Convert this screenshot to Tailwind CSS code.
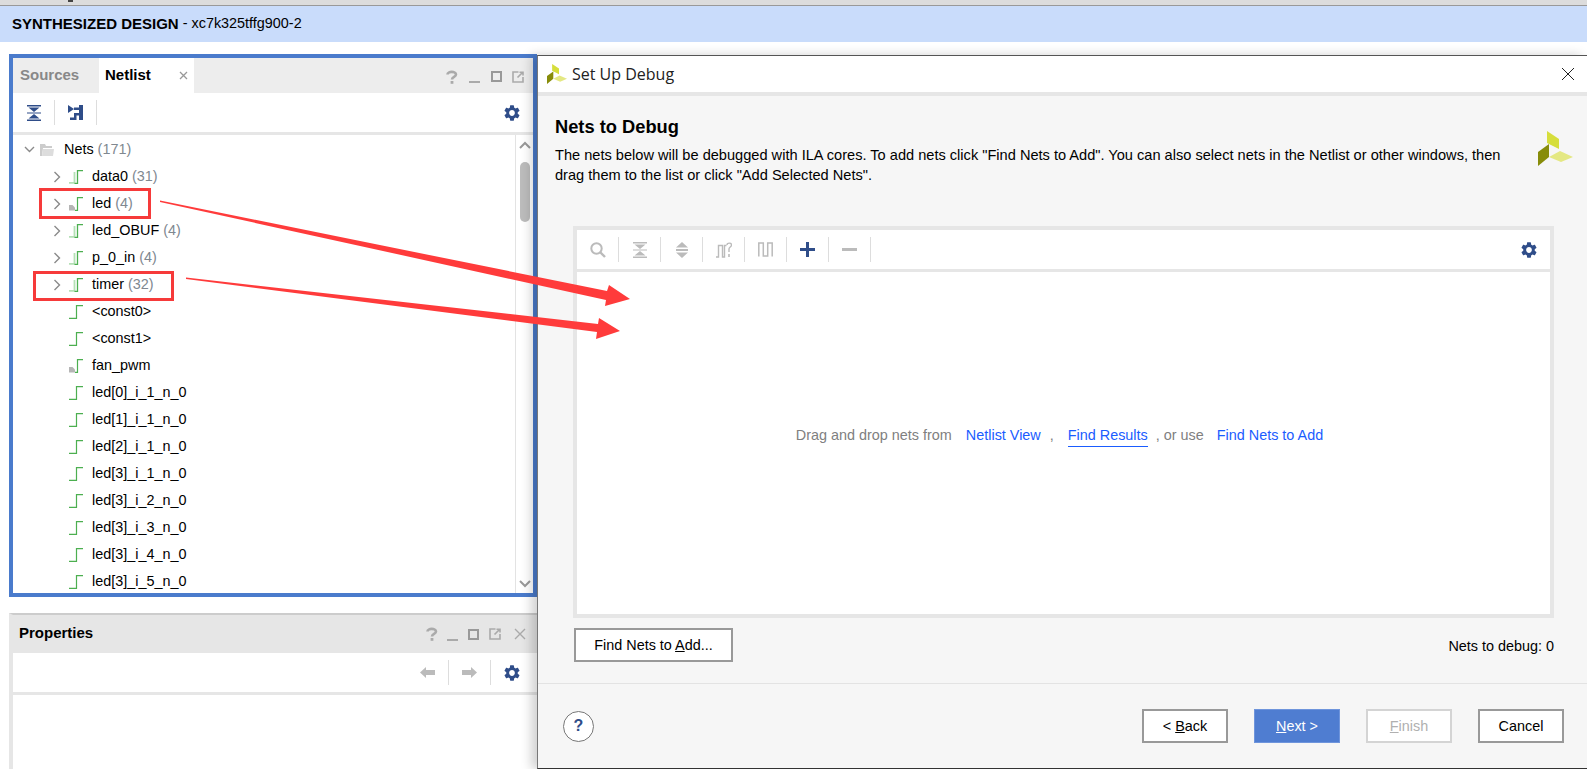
<!DOCTYPE html>
<html lang="en">
<head>
    <meta charset="UTF-8">
    <title>Set Up Debug</title>
    <script src="https://cdn.jsdelivr.net/npm/@tailwindcss/browser@4"></script>
</head>
<body class="bg-white">
    <svg class="hidden">
        <symbol id="gear" viewBox="2 2 20 20"><path fill="#2f4d89" d="M19.14 12.94c.04-.3.06-.61.06-.94 0-.32-.02-.64-.07-.94l2.03-1.58a.49.49 0 0 0 .12-.61l-1.92-3.32a.488.488 0 0 0-.59-.22l-2.39.96c-.5-.38-1.03-.7-1.62-.94l-.36-2.54a.484.484 0 0 0-.48-.41h-3.84c-.24 0-.43.17-.47.41l-.36 2.54c-.59.24-1.13.57-1.62.94l-2.39-.96c-.22-.08-.47 0-.59.22L2.74 8.87c-.12.21-.08.47.12.61l2.03 1.58c-.05.3-.09.63-.09.94s.02.64.07.94l-2.03 1.58a.49.49 0 0 0-.12.61l1.92 3.32c.12.22.37.29.59.22l2.39-.96c.5.38 1.03.7 1.62.94l.36 2.54c.05.24.24.41.48.41h3.84c.24 0 .44-.17.47-.41l.36-2.54c.59-.24 1.13-.56 1.62-.94l2.39.96c.22.08.47 0 .59-.22l1.92-3.32c.12-.22.07-.47-.12-.61l-2.01-1.58zM12 15.6c-1.98 0-3.6-1.62-3.6-3.6s1.62-3.6 3.6-3.6 3.6 1.62 3.6 3.6-1.62 3.6-3.6 3.6z"/></symbol>
        <symbol id="net" viewBox="0 0 14 14"><path fill="none" stroke="#4caf50" stroke-width="1.2" d="M0 13.4H7.5V.6H14"/></symbol>
        <symbol id="bus" viewBox="0 0 14 14"><path fill="none" stroke="#b5e0b6" stroke-width="1.8" d="M0 12.8H5.5V2"/><path fill="none" stroke="#4caf50" stroke-width="1.3" d="M5.5 13.4H8.5V.6H14"/></symbol>
        <symbol id="port" viewBox="0 0 14 14"><path fill="#b5b5b5" d="M0 8H3.5L6 10.5V13.5H0Z"/><path fill="none" stroke="#4caf50" stroke-width="1.2" d="M6 13.4H8.5V.6H14"/></symbol>
        <symbol id="chev" viewBox="0 0 8 12"><path fill="none" stroke="#8a8a8a" stroke-width="1.4" d="M1.5 1 6.5 6 1.5 11"/></symbol>
        <symbol id="logo" viewBox="0 0 35 35"><path fill="#d6de3c" d="M9 0 21 8V18L9 12Z"/><path fill="#878c0a" d="M0 21 11 13V26L0 35Z"/><path fill="#e4e883" d="M11 26 22 20 35 26 23 31Z"/></symbol>
        <symbol id="win-q" viewBox="0 0 12 14"><path fill="none" stroke="#aaa" stroke-width="2.6" d="M1.5 4.5C1.5 1 10 1 10 4.5 10 7 6 6.8 6 9.5"/><rect x="4.6" y="11" width="2.8" height="2.8" fill="#aaa"/></symbol>
        <symbol id="win-pop" viewBox="0 0 12 12"><path fill="none" stroke="#aaa" stroke-width="1.6" d="M6.5 1H1V11H11V6"/><path fill="none" stroke="#aaa" stroke-width="1.6" d="M5.5 6.5 10 2M7.5 1.2H11V4.5"/></symbol>
    </svg>

    <div class="relative w-[1587px] h-[769px] overflow-hidden flex flex-col font-['Liberation_Sans',Arial,sans-serif] text-[14.4px] text-black">
        <div class="h-[6px] shrink-0 bg-[#dcdcdc] border-b border-[#999]">
            <div class="ml-[68px] w-[5px] h-[2px] bg-[#444]"></div>
        </div>
        <div class="h-[36px] shrink-0 bg-[#c9dcfb] flex items-center pl-[12px]">
            <span class="font-bold text-[15px]">SYNTHESIZED DESIGN</span><span class="whitespace-pre"> - xc7k325tffg900-2</span>
        </div>

        <div class="flex-1 flex min-h-0">
            <!-- left column -->
            <div class="w-[537px] shrink-0 pl-[9px] pt-[12px] flex flex-col">
                <div class="h-[543px] shrink-0 border-4 border-[#4a7bcc] flex flex-col">
                    <div class="h-[35px] shrink-0 bg-[#ededed] flex">
                        <div class="w-[86px] pl-[7px] pt-[6px] font-bold text-[15px] text-[#888]">Sources</div>
                        <div class="w-[95px] bg-white pl-[6px] pt-[6px] font-bold text-[15px] flex justify-between">
                            <span>Netlist</span>
                            <svg class="w-[9px] h-[9px] mt-[7px] mr-[6px]" viewBox="0 0 9 9"><path stroke="#999" stroke-width="1.3" d="M1 1 8 8M8 1 1 8"/></svg>
                        </div>
                        <div class="ml-auto flex items-center pr-[4px] pt-[2px]">
                            <div class="w-[22px] flex justify-center"><svg class="w-[12px] h-[14px]"><use href="#win-q"/></svg></div>
                            <div class="w-[22px] flex justify-center"><div class="w-[11px] h-[2px] mt-[11px] bg-[#aaa]"></div></div>
                            <div class="w-[22px] flex justify-center"><div class="w-[11px] h-[11px] border-2 border-[#999]"></div></div>
                            <div class="w-[22px] flex justify-center"><svg class="w-[12px] h-[12px]"><use href="#win-pop"/></svg></div>
                        </div>
                    </div>
                    <div class="h-[39px] shrink-0 flex items-center border-b-[3px] border-[#e6e6e6] box-content">
                        <div class="w-[42px] h-[25px] flex items-center justify-center border-r border-[#ddd]">
                            <svg class="w-[14px] h-[16px]" viewBox="0 0 14 16"><path fill="#2f4d89" d="M0 0H14V1.6H0ZM1.5 2.4H12.5L7 7ZM7 9 12.5 13.6H1.5ZM0 14.4H14V16H0ZM0 7.4H14V8.6H0Z"/></svg>
                        </div>
                        <div class="w-[42px] h-[25px] flex items-center justify-center border-r border-[#ddd]">
                            <svg class="w-[15px] h-[15px]" viewBox="0 0 15 15"><path fill="#2f4d89" d="M0 0 6 4 0 8ZM11 0H15V15H11ZM6 2.5H11V5H6ZM2 12.5H6V8H11V10.5H8.5V15H2Z"/></svg>
                        </div>
                        <div class="ml-auto w-[42px] flex justify-center"><svg class="w-[16px] h-[16px]"><use href="#gear"/></svg></div>
                    </div>
                    <div class="flex-1 min-h-0 flex">
                        <div class="flex-1 overflow-hidden pt-[1px]">
                            <div class="h-[27px] flex items-center pl-[11px]">
                                <svg class="w-[11px] h-[7px]" viewBox="0 0 11 7"><path fill="none" stroke="#8a8a8a" stroke-width="1.4" d="M1 1 5.5 5.5 10 1"/></svg>
                                <svg class="w-[14px] h-[12px] ml-[5px]" viewBox="0 0 14 12"><path fill="#ccc" d="M0 0H5L6 2H12V4H3L2 12H0Z"/><path fill="#ddd" d="M3 5H14L13 12H2Z"/></svg>
                                <span class="ml-[10px]">Nets <span class="text-[#808890]">(171)</span></span>
                            </div>
                            <div class="h-[27px] flex items-center pl-[40px]"><svg class="w-[8px] h-[12px]"><use href="#chev"/></svg><svg class="w-[14px] h-[14px] ml-[8px]"><use href="#bus"/></svg><span class="ml-[9px]">data0 <span class="text-[#808890]">(31)</span></span></div>
                            <div class="h-[27px] flex items-center pl-[40px]"><svg class="w-[8px] h-[12px]"><use href="#chev"/></svg><svg class="w-[14px] h-[14px] ml-[8px]"><use href="#port"/></svg><span class="ml-[9px]">led <span class="text-[#808890]">(4)</span></span></div>
                            <div class="h-[27px] flex items-center pl-[40px]"><svg class="w-[8px] h-[12px]"><use href="#chev"/></svg><svg class="w-[14px] h-[14px] ml-[8px]"><use href="#bus"/></svg><span class="ml-[9px]">led_OBUF <span class="text-[#808890]">(4)</span></span></div>
                            <div class="h-[27px] flex items-center pl-[40px]"><svg class="w-[8px] h-[12px]"><use href="#chev"/></svg><svg class="w-[14px] h-[14px] ml-[8px]"><use href="#bus"/></svg><span class="ml-[9px]">p_0_in <span class="text-[#808890]">(4)</span></span></div>
                            <div class="h-[27px] flex items-center pl-[40px]"><svg class="w-[8px] h-[12px]"><use href="#chev"/></svg><svg class="w-[14px] h-[14px] ml-[8px]"><use href="#bus"/></svg><span class="ml-[9px]">timer <span class="text-[#808890]">(32)</span></span></div>
                            <div class="h-[27px] flex items-center pl-[56px]"><svg class="w-[14px] h-[14px]"><use href="#net"/></svg><span class="ml-[9px]">&lt;const0&gt;</span></div>
                            <div class="h-[27px] flex items-center pl-[56px]"><svg class="w-[14px] h-[14px]"><use href="#net"/></svg><span class="ml-[9px]">&lt;const1&gt;</span></div>
                            <div class="h-[27px] flex items-center pl-[56px]"><svg class="w-[14px] h-[14px]"><use href="#port"/></svg><span class="ml-[9px]">fan_pwm</span></div>
                            <div class="h-[27px] flex items-center pl-[56px]"><svg class="w-[14px] h-[14px]"><use href="#net"/></svg><span class="ml-[9px]">led[0]_i_1_n_0</span></div>
                            <div class="h-[27px] flex items-center pl-[56px]"><svg class="w-[14px] h-[14px]"><use href="#net"/></svg><span class="ml-[9px]">led[1]_i_1_n_0</span></div>
                            <div class="h-[27px] flex items-center pl-[56px]"><svg class="w-[14px] h-[14px]"><use href="#net"/></svg><span class="ml-[9px]">led[2]_i_1_n_0</span></div>
                            <div class="h-[27px] flex items-center pl-[56px]"><svg class="w-[14px] h-[14px]"><use href="#net"/></svg><span class="ml-[9px]">led[3]_i_1_n_0</span></div>
                            <div class="h-[27px] flex items-center pl-[56px]"><svg class="w-[14px] h-[14px]"><use href="#net"/></svg><span class="ml-[9px]">led[3]_i_2_n_0</span></div>
                            <div class="h-[27px] flex items-center pl-[56px]"><svg class="w-[14px] h-[14px]"><use href="#net"/></svg><span class="ml-[9px]">led[3]_i_3_n_0</span></div>
                            <div class="h-[27px] flex items-center pl-[56px]"><svg class="w-[14px] h-[14px]"><use href="#net"/></svg><span class="ml-[9px]">led[3]_i_4_n_0</span></div>
                            <div class="h-[27px] flex items-center pl-[56px]"><svg class="w-[14px] h-[14px]"><use href="#net"/></svg><span class="ml-[9px]">led[3]_i_5_n_0</span></div>
                        </div>
                        <div class="w-[18px] shrink-0 border-l border-[#e3e3e3] flex flex-col items-center pt-[6px] pb-[5px]">
                            <svg class="w-[12px] h-[8px]" viewBox="0 0 12 8"><path fill="none" stroke="#999" stroke-width="2" d="M1 7 6 2 11 7"/></svg>
                            <div class="w-[10px] h-[60px] mt-[13px] rounded-full bg-[#bcbcbc]"></div>
                            <svg class="w-[12px] h-[8px] mt-auto" viewBox="0 0 12 8"><path fill="none" stroke="#999" stroke-width="2" d="M1 1 6 6 11 1"/></svg>
                        </div>
                    </div>
                </div>

                <div class="mt-[16px] flex-1 border-t-2 border-l-4 border-t-[#ccc] border-l-[#e6e6e6] flex flex-col">
                    <div class="h-[38px] shrink-0 bg-[#e6e6e6] flex items-center pl-[6px]">
                        <span class="mb-[1px] font-bold text-[15px]">Properties</span>
                        <div class="ml-auto flex items-center pr-[3px]">
                            <div class="w-[21px] flex justify-center"><svg class="w-[12px] h-[14px]"><use href="#win-q"/></svg></div>
                            <div class="w-[21px] flex justify-center"><div class="w-[11px] h-[2px] mt-[11px] bg-[#aaa]"></div></div>
                            <div class="w-[21px] flex justify-center"><div class="w-[11px] h-[11px] border-2 border-[#999]"></div></div>
                            <div class="w-[21px] flex justify-center"><svg class="w-[12px] h-[12px]"><use href="#win-pop"/></svg></div>
                            <div class="w-[29px] flex justify-center"><svg class="w-[12px] h-[12px]" viewBox="0 0 12 12"><path stroke="#aaa" stroke-width="1.4" d="M1 1 11 11M11 1 1 11"/></svg></div>
                        </div>
                    </div>
                    <div class="h-[39px] shrink-0 box-content border-b-[3px] border-[#e6e6e6] flex items-center justify-end pr-[4px]">
                        <div class="w-[42px] h-[25px] flex items-center justify-center border-r border-[#ddd]">
                            <svg class="w-[15px] h-[11px]" viewBox="0 0 15 11"><path fill="#bbb" d="M0 5.5 6 0V3H15V8H6V11Z"/></svg>
                        </div>
                        <div class="w-[42px] h-[25px] flex items-center justify-center border-r border-[#ddd]">
                            <svg class="w-[15px] h-[11px]" viewBox="0 0 15 11"><path fill="#bbb" d="M15 5.5 9 0V3H0V8H9V11Z"/></svg>
                        </div>
                        <div class="w-[42px] flex justify-center"><svg class="w-[16px] h-[16px]"><use href="#gear"/></svg></div>
                    </div>
                    <div class="flex-1 bg-white"></div>
                </div>
            </div>

            <!-- dialog -->
            <div class="relative z-10 flex-1 mt-[13px] flex flex-col border-t border-l border-b border-t-[#555] border-l-[#777] border-b-[#333] bg-[#f6f6f6] shadow-[-6px_0_10px_rgba(0,0,0,0.18)]">
                <div class="h-[36px] shrink-0 bg-white flex items-center pl-[9px] pr-[13px] box-content border-b-4 border-[#e6e6e6]">
                    <svg class="w-[20px] h-[20px]"><use href="#logo"/></svg>
                    <span class="ml-[5px] font-['Open_Sans',sans-serif] text-[16px] text-[#222]">Set Up Debug</span>
                    <svg class="ml-auto w-[12px] h-[12px]" viewBox="0 0 12 12"><path stroke="#222" stroke-width="1" d="M0 0 12 12M12 0 0 12"/></svg>
                </div>
                <div class="flex-1 flex flex-col min-h-0">
                    <div class="relative pl-[17px] pr-[60px] pt-[20px]">
                        <h2 class="text-[18.3px] leading-[22px] font-bold">Nets to Debug</h2>
                        <p class="mt-[7px] leading-[20px] text-[14.6px]">The nets below will be debugged with ILA cores. To add nets click "Find Nets to Add". You can also select nets in the Netlist or other windows, then<br>drag them to the list or click "Add Selected Nets".</p>
                        <svg class="absolute left-[1000px] top-[35px] w-[35px] h-[35px]"><use href="#logo"/></svg>
                    </div>
                    <div class="ml-[35px] mt-[41px] w-[981px] h-[392px] shrink-0 border-4 border-[#e6e6e6] bg-white flex flex-col">
                        <div class="h-[39px] shrink-0 box-content border-b-[3px] border-[#e6e6e6] flex items-center">
                            <div class="w-[42px] h-[25px] flex items-center justify-center border-r border-[#ddd]">
                                <svg class="w-[16px] h-[16px]" viewBox="0 0 16 16"><circle cx="6.5" cy="6.5" r="5.2" fill="none" stroke="#bbb" stroke-width="2"/><path stroke="#bbb" stroke-width="2.4" d="M10.5 10.5 15 15"/></svg>
                            </div>
                            <div class="w-[42px] h-[25px] flex items-center justify-center border-r border-[#ddd]">
                                <svg class="w-[14px] h-[16px]" viewBox="0 0 14 16"><path fill="#bbb" d="M0 0H14V1.6H0ZM1.5 2.4H12.5L7 7ZM7 9 12.5 13.6H1.5ZM0 14.4H14V16H0ZM0 7.4H14V8.6H0Z"/></svg>
                            </div>
                            <div class="w-[42px] h-[25px] flex items-center justify-center border-r border-[#ddd]">
                                <svg class="w-[12px] h-[16px]" viewBox="0 0 12 16"><path fill="#bbb" d="M6 0 12 5.5H0ZM0 7H12V9H0ZM0 10.5H12L6 16Z"/></svg>
                            </div>
                            <div class="w-[42px] h-[25px] flex items-center justify-center border-r border-[#ddd]">
                                <svg class="w-[16px] h-[16px]" viewBox="0 0 16 16"><path fill="none" stroke="#bbb" stroke-width="1.4" d="M0 15H2.5V3.5H6.5V15H8.5V3.5H10.5M11 3C11 .5 15.5 .5 15.5 3 15.5 5 13 5 13 7V10"/><path stroke="#bbb" stroke-width="1.6" d="M13 12V15"/></svg>
                            </div>
                            <div class="w-[42px] h-[25px] flex items-center justify-center border-r border-[#ddd]">
                                <svg class="w-[15px] h-[15px]" viewBox="0 0 15 15"><path fill="none" stroke="#bbb" stroke-width="1.5" d="M.8 14.5V1H5.3V14H9.7V1H14.2V14.5"/></svg>
                            </div>
                            <div class="w-[42px] h-[25px] flex items-center justify-center border-r border-[#ddd]">
                                <svg class="w-[15px] h-[15px]" viewBox="0 0 15 15"><path fill="#2f4d89" d="M6 0H9V6H15V9H9V15H6V9H0V6H6Z"/></svg>
                            </div>
                            <div class="w-[42px] h-[25px] flex items-center justify-center border-r border-[#ddd]">
                                <div class="w-[15px] h-[3px] bg-[#bbb]"></div>
                            </div>
                            <div class="ml-auto w-[42px] flex justify-center"><svg class="w-[16px] h-[16px]"><use href="#gear"/></svg></div>
                        </div>
                        <div class="flex-1 flex items-center justify-center pb-[14px] pr-[8px] text-[#808080]">
                            <span>Drag and drop nets from</span>
                            <span class="ml-[14px] text-[#1a5cff]">Netlist View</span>
                            <span class="ml-[9px]">,</span>
                            <span class="ml-[14px] text-[#1a5cff] border-b border-[#1a5cff]">Find Results</span>
                            <span class="ml-[8px]">, or use</span>
                            <span class="ml-[13px] text-[#1a5cff]">Find Nets to Add</span>
                        </div>
                    </div>
                    <div class="mt-[10px] ml-[36px] mr-[33px] flex items-center justify-between">
                        <div class="w-[159px] h-[34px] pt-[2px] border-2 border-[#999] bg-white flex items-center justify-center">
                            <span>Find Nets to <span class="underline">A</span>dd...</span>
                        </div>
                        <span class="pt-[3px]">Nets to debug: 0</span>
                    </div>
                    <div class="mt-[21px] border-t border-[#e3e3e3]"></div>
                    <div class="mt-[25px] pl-[25px] pr-[23px] flex items-center">
                        <div class="w-[31px] h-[31px] rounded-full border border-[#777] bg-white flex items-center justify-center font-bold text-[16px] text-[#2f4d89]">?</div>
                        <div class="ml-auto flex gap-[26px]">
                            <div class="w-[86px] h-[34px] pt-[2px] border-2 border-[#999] bg-white flex items-center justify-center"><span>&lt; <span class="underline">B</span>ack</span></div>
                            <div class="w-[86px] h-[34px] pt-[2px] border border-[#6f95dc] bg-[#4f7dd1] text-white flex items-center justify-center"><span><span class="underline">N</span>ext &gt;</span></div>
                            <div class="w-[86px] h-[34px] pt-[2px] border-2 border-[#d4d4d4] bg-white text-[#b0b0b0] flex items-center justify-center"><span><span class="underline">F</span>inish</span></div>
                            <div class="w-[86px] h-[34px] pt-[2px] border-2 border-[#999] bg-white flex items-center justify-center">Cancel</div>
                        </div>
                    </div>
                </div>
            </div>
        </div>

        <!-- red annotations drawn over the screenshot -->
        <svg class="absolute left-0 top-0 z-20 pointer-events-none" width="1587" height="769" viewBox="0 0 1587 769">
            <rect x="40.5" y="189.5" width="109" height="28" fill="none" stroke="#f63a3a" stroke-width="3"/>
            <rect x="34.5" y="272.5" width="138" height="27" fill="none" stroke="#f63a3a" stroke-width="3"/>
            <path fill="#ff3b3b" d="M160 200.5 607 291 609 285 630 299 605 306 606 300 160 202Z"/>
            <path fill="#ff3b3b" d="M186 277.5 598 324 599 318 620 331 596 339 597 332 186 279Z"/>
        </svg>
    </div>
</body>
</html>
